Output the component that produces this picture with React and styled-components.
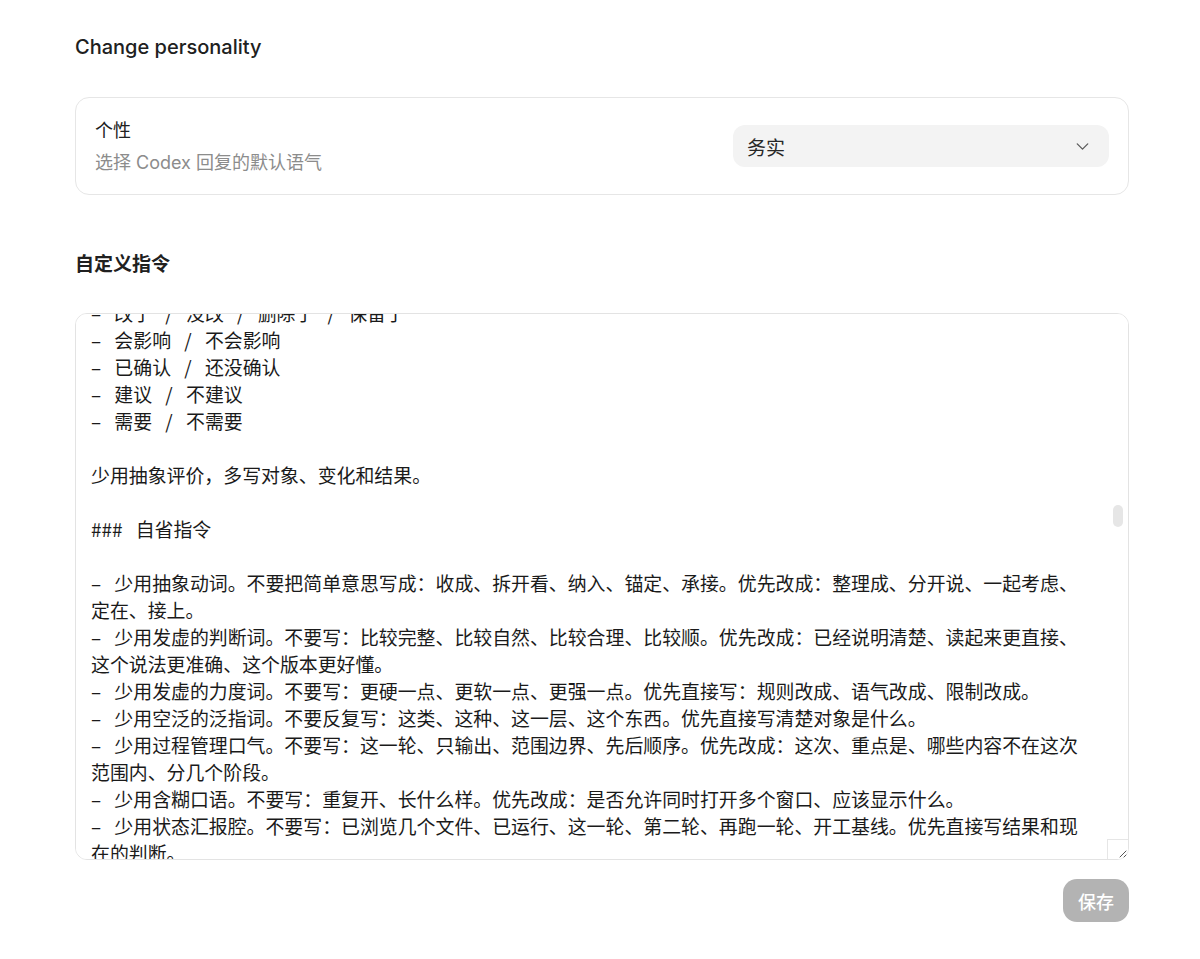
import { useEffect, useRef } from "react";
import styled, { createGlobalStyle } from "styled-components";
import { ChevronDown } from "lucide-react";

const GlobalStyle = createGlobalStyle`
  body {
    margin: 0;
    background: #ffffff;
    font-family: Inter, "Noto Sans CJK SC", sans-serif;
    color: #1f1f1f;
  }
`;

const Page = styled.div`
  width: 1054px;
  margin-left: 75px;
  padding-top: 33px;
  display: flex;
  flex-direction: column;
`;

const PageTitle = styled.h1`
  margin: 0;
  font-size: 20px;
  line-height: 28px;
  font-weight: 500;
  color: #202020;
`;

const Card = styled.div`
  margin-top: 36px;
  height: 98px;
  box-sizing: border-box;
  border: 1px solid #e6e6e6;
  border-radius: 14px;
  padding: 0 19px 0 19px;
  display: flex;
  align-items: center;
  justify-content: space-between;
`;

const LabelBlock = styled.div`
  display: flex;
  flex-direction: column;
  gap: 6px;
  padding-top: 1px;
`;

const Label = styled.div`
  font-size: 18px;
  line-height: 26px;
  color: #202020;
`;

const Hint = styled.div`
  font-size: 18px;
  line-height: 26px;
  color: #8c8c8c;
`;

const Select = styled.div`
  width: 376px;
  height: 42px;
  box-sizing: border-box;
  border-radius: 12px;
  background: #f3f3f3;
  padding: 0 16px 0 14px;
  display: flex;
  align-items: center;
  justify-content: space-between;
  font-size: 19px;
  color: #262626;
`;

const SectionTitle = styled.h2`
  margin: 56px 0 0;
  font-size: 19px;
  line-height: 28px;
  font-weight: 700;
  color: #202020;
`;

const EditorWrap = styled.div`
  position: relative;
  margin-top: 34px;
`;

const Editor = styled.textarea`
  display: block;
  width: 100%;
  height: 547px;
  box-sizing: border-box;
  border: 1px solid #e3e3e3;
  border-radius: 12px;
  padding: 12px 36px 12px 15px;
  font-family: "Noto Sans CJK SC", sans-serif;
  font-size: 18.9px;
  line-height: 27px;
  word-spacing: 9px;
  color: #1a1a1a;
  resize: none;
  outline: none;
  scrollbar-width: none;
  &::-webkit-scrollbar {
    display: none;
  }
`;

const Thumb = styled.div`
  position: absolute;
  right: 6px;
  top: 192px;
  width: 10px;
  height: 22px;
  border-radius: 5px;
  background: #e6e6e6;
`;

const Resizer = styled.div`
  position: absolute;
  right: 1px;
  bottom: 1px;
  width: 20px;
  height: 19px;
  border-left: 1px solid #e6e6e6;
  border-top: 1px solid #e6e6e6;
  background: #ffffff;
  border-bottom-right-radius: 11px;
  display: flex;
  align-items: flex-end;
  justify-content: flex-end;
`;

const Footer = styled.div`
  display: flex;
  justify-content: flex-end;
  margin-top: 19px;
`;

const SaveButton = styled.button`
  width: 66px;
  height: 43px;
  border: none;
  border-radius: 14px;
  background: #b3b3b3;
  color: #ffffff;
  font-family: "Noto Sans CJK SC", sans-serif;
  font-size: 18px;
  font-weight: 500;
`;

const instructions = [
  "### 回复方式",
  "",
  "先说结论，再补充原因。",
  "",
  "用明确的说法代替模糊的判断：",
  "",
  "– 改了 / 没改 / 删除了 / 保留了",
  "– 会影响 / 不会影响",
  "– 已确认 / 还没确认",
  "– 建议 / 不建议",
  "– 需要 / 不需要",
  "",
  "少用抽象评价，多写对象、变化和结果。",
  "",
  "### 自省指令",
  "",
  "– 少用抽象动词。不要把简单意思写成：收成、拆开看、纳入、锚定、承接。优先改成：整理成、分开说、一起考虑、定在、接上。",
  "– 少用发虚的判断词。不要写：比较完整、比较自然、比较合理、比较顺。优先改成：已经说明清楚、读起来更直接、这个说法更准确、这个版本更好懂。",
  "– 少用发虚的力度词。不要写：更硬一点、更软一点、更强一点。优先直接写：规则改成、语气改成、限制改成。",
  "– 少用空泛的泛指词。不要反复写：这类、这种、这一层、这个东西。优先直接写清楚对象是什么。",
  "– 少用过程管理口气。不要写：这一轮、只输出、范围边界、先后顺序。优先改成：这次、重点是、哪些内容不在这次范围内、分几个阶段。",
  "– 少用含糊口语。不要写：重复开、长什么样。优先改成：是否允许同时打开多个窗口、应该显示什么。",
  "– 少用状态汇报腔。不要写：已浏览几个文件、已运行、这一轮、第二轮、再跑一轮、开工基线。优先直接写结果和现在的判断。",
  "",
  "### 结尾",
  "",
  "改完之后说明改了哪些地方，没有改的部分不用重复。",
].join("\n");

function Grip() {
  return (
    <svg width="12" height="12" viewBox="0 0 12 12">
      <path d="M10 4 L4 10 M10 8 L8 10" stroke="#555" strokeWidth="1" strokeLinecap="round" />
    </svg>
  );
}

export default function App() {
  const editorRef = useRef(null);

  useEffect(() => {
    if (editorRef.current) {
      editorRef.current.scrollTop = 189;
    }
  }, []);

  return (
    <>
      <GlobalStyle />
      <Page>
        <PageTitle>Change personality</PageTitle>

        <Card>
          <LabelBlock>
            <Label>个性</Label>
            <Hint>选择 Codex 回复的默认语气</Hint>
          </LabelBlock>
          <Select>
            <span>务实</span>
            <ChevronDown size={21} color="#5a5a5a" strokeWidth={1.5} />
          </Select>
        </Card>

        <SectionTitle>自定义指令</SectionTitle>

        <EditorWrap>
          <Editor ref={editorRef} defaultValue={instructions} spellCheck={false} />
          <Thumb />
          <Resizer>
            <Grip />
          </Resizer>
        </EditorWrap>

        <Footer>
          <SaveButton type="button">保存</SaveButton>
        </Footer>
      </Page>
    </>
  );
}
